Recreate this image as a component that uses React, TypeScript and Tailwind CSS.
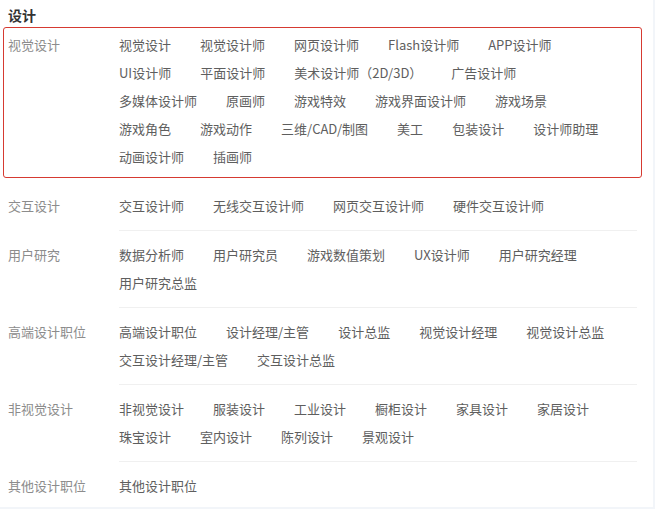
import React from "react";

type Group = { label: string; items: string[]; active?: boolean };

const GROUPS: Group[] = [
  {
    label: "视觉设计",
    active: true,
    items: [
      "视觉设计",
      "视觉设计师",
      "网页设计师",
      "Flash设计师",
      "APP设计师",
      "UI设计师",
      "平面设计师",
      "美术设计师（2D/3D）",
      "广告设计师",
      "多媒体设计师",
      "原画师",
      "游戏特效",
      "游戏界面设计师",
      "游戏场景",
      "游戏角色",
      "游戏动作",
      "三维/CAD/制图",
      "美工",
      "包装设计",
      "设计师助理",
      "动画设计师",
      "插画师",
    ],
  },
  { label: "交互设计", items: ["交互设计师", "无线交互设计师", "网页交互设计师", "硬件交互设计师"] },
  {
    label: "用户研究",
    items: ["数据分析师", "用户研究员", "游戏数值策划", "UX设计师", "用户研究经理", "用户研究总监"],
  },
  {
    label: "高端设计职位",
    items: ["高端设计职位", "设计经理/主管", "设计总监", "视觉设计经理", "视觉设计总监", "交互设计经理/主管", "交互设计总监"],
  },
  {
    label: "非视觉设计",
    items: ["非视觉设计", "服装设计", "工业设计", "橱柜设计", "家具设计", "家居设计", "珠宝设计", "室内设计", "陈列设计", "景观设计"],
  },
  { label: "其他设计职位", items: ["其他设计职位"] },
];

function ItemList({ items }: { items: string[] }) {
  return (
    <div className="flex flex-wrap">
      {items.map((it) => (
        <span key={it} className="mr-[29px] whitespace-nowrap text-[13px] leading-[28px] text-[#5e5e5e]">
          {it}
        </span>
      ))}
    </div>
  );
}

export default function App() {
  const [active, ...rest] = GROUPS;
  return (
    <div
      className="h-[509px] w-[655px] overflow-hidden bg-[#f2f5f9]"
      style={{ fontFamily: '"Noto Sans CJK SC", "Noto Sans", sans-serif' }}
    >
      <div className="h-[507px] w-[653px] overflow-hidden bg-white">
        <div className="pl-[8px] pt-[5px] text-[14px] font-bold leading-[20px] text-[#333]">设计</div>

        {/* hovered group */}
        <div className="ml-[3px] mt-[2px] flex w-[639px] rounded-[3px] border border-[#d63a31] pb-[6px] pt-[3px]">
          <div className="w-[115px] shrink-0 pl-[4px] text-[13px] leading-[28px] text-[#8c8c8c]">{active.label}</div>
          <div className="w-[518px]">
            <ItemList items={active.items} />
          </div>
        </div>

        <div className="mt-[4px]">
          {rest.map((g) => (
            <div key={g.label} className="flex">
              <div className="w-[119px] shrink-0 pl-[8px] pt-[10px] text-[13px] leading-[28px] text-[#8c8c8c]">
                {g.label}
              </div>
              <div className="w-[518px] border-b border-[#f0f0f0] py-[10px]">
                <ItemList items={g.items} />
              </div>
            </div>
          ))}
        </div>
      </div>
    </div>
  );
}
